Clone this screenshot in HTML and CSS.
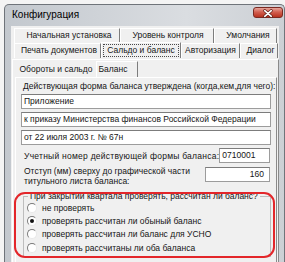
FILE: index.html
```html
<!DOCTYPE html>
<html lang="ru">
<head>
    <meta charset="UTF-8">
    <title>Конфигурация</title>
    <link rel="stylesheet" href="styles.css">
</head>
<body>
    <div class="window">
        <div class="titlebar">
            <span class="title">Конфигурация</span>
            <span class="close">
                <svg width="30" height="11" viewBox="0 0 30 11">
                    <path d="M11.5 2.5 L18.5 8.5 M18.5 2.5 L11.5 8.5" stroke="#5a1d17" stroke-width="3.2" stroke-linecap="round"/>
                    <path d="M11.5 2.5 L18.5 8.5 M18.5 2.5 L11.5 8.5" stroke="#ffffff" stroke-width="1.8" stroke-linecap="round"/>
                </svg>
            </span>
        </div>
        <div class="client">
            <div class="tab-row">
                <div class="tab t-start">Начальная установка</div>
                <div class="tab t-level">Уровень контроля</div>
                <div class="tab t-default">Умолчания</div>
            </div>
            <div class="tab-row">
                <div class="tab t-print">Печать документов</div>
                <div class="tab t-saldo active"><span class="focus">Сальдо и баланс</span></div>
                <div class="tab t-auth">Авторизация</div>
                <div class="tab t-dialog">Диалог</div>
            </div>
            <div class="page">
                <div class="subtabs">
                    <div class="subtab s-turn">Обороты и сальдо</div>
                    <div class="subtab s-balance active">Баланс</div>
                </div>
                <div class="subpage">
                    <div class="caption">Действующая форма баланса утверждена (когда,кем,для чего):</div>
                    <div class="field">Приложение</div>
                    <div class="field">к приказу Министерства финансов Российской Федерации</div>
                    <div class="field">от 22 июля 2003 г. № 67н</div>

                    <div class="form-row">
                        <span class="row-label wide">Учетный номер действующей формы баланса:</span>
                        <div class="field num">0710001</div>
                    </div>
                    <div class="form-row top">
                        <span class="row-label">Отступ (мм) сверху до графической части<br>титульного листа баланса:</span>
                        <div class="field num offset">160</div>
                    </div>

                    <fieldset class="group">
                        <legend>При закрытии квартала проверять, рассчитан ли баланс?</legend>
                        <div class="radio"><span class="dot"></span>не проверять</div>
                        <div class="radio"><span class="dot checked"></span>проверять рассчитан ли обыный баланс</div>
                        <div class="radio"><span class="dot"></span>проверять рассчитан ли баланс для УСНО</div>
                        <div class="radio"><span class="dot"></span>проверять рассчитаны ли оба баланса</div>
                    </fieldset>
                </div>
            </div>
        </div>
    </div>
    <div class="highlight"></div>
</body>
</html>
```

FILE: styles.css
```css
* {
    margin: 0;
    padding: 0;
    box-sizing: border-box;
}

body {
    position: relative;
    width: 285px;
    height: 262px;
    overflow: hidden;
    background-color: #f4f4f4;
    font-family: "Liberation Sans", Arial, sans-serif;
    font-size: 8.5px;
    color: #151515;
}

/* window frame */
.window {
    margin: 4px 0 0 4px;
    width: 281px;
    height: 258px;
    padding: 0 5px 0 6px;
    border: 1px solid #6f747a;
    border-bottom: none;
    border-radius: 5px 5px 0 0;
    background: linear-gradient(to right, #c3c8ce, #dadde1 65%, #ccd0d5);
}

.titlebar {
    height: 21px;
    display: flex;
    justify-content: space-between;
    align-items: flex-start;
}

.title {
    padding: 4px 0 0 1px;
    font-size: 10px;
    color: #000;
}

.close {
    margin: 2px -4px 0 0;
    width: 30px;
    height: 11px;
    border: 1px solid #7a2a22;
    border-radius: 3px;
    background: linear-gradient(to bottom, #e7a59b, #d25f50 45%, #b8321f);
    display: flex;
}

.client {
    height: 236px;
    padding-top: 2px;
    background-color: #f0f0f0;
}

/* outer tabs */
.tab-row {
    display: flex;
    height: 15px;
    padding-left: 3px;
}

.tab {
    height: 15px;
    line-height: 13px;
    text-align: center;
    border-top: 1px solid #fff;
    border-left: 1px solid #fff;
    border-right: 1px solid #7d7d7d;
    white-space: nowrap;
}

.t-start { width: 106px; padding-left: 4px; }
.t-level { width: 94px; padding-left: 2px; }
.t-default { width: 63px; padding-left: 5px; }
.t-print { width: 87px; padding-left: 3px; }
.t-saldo { width: 80px; }
.t-auth { width: 59px; }
.t-dialog { width: 38px; padding-left: 3px; }

.tab.active {
    height: 16px;
    margin-top: -1px;
    padding-top: 1px;
}

.focus {
    display: inline-block;
    line-height: 11px;
    padding: 0 3px;
    border: 1px dotted #4a4a4a;
}

.page {
    height: 204px;
    margin: 1px 0 0 1px;
    padding: 1px 1px 0 2px;
    border-top: 1px solid #fff;
    border-left: 1px solid #fff;
    border-right: 1px solid #8a8a8a;
}

/* inner tabs */
.subtabs {
    display: flex;
    height: 16px;
    padding-left: 1px;
}

.subtab {
    height: 16px;
    line-height: 14px;
    text-align: center;
    white-space: nowrap;
}

.s-turn { width: 80px; padding-top: 1px; }
.s-balance {
    width: 42px;
    border-top: 1px solid #fff;
    border-left: 1px solid #fff;
    border-right: 1px solid #7d7d7d;
    padding-right: 8px;
}

.subpage {
    height: 186px;
    padding: 3px 5px 0 5px;
    border-top: 1px solid #fff;
    border-left: 1px solid #fff;
    border-right: 1px solid #8a8a8a;
}

.caption {
    height: 10px;
    line-height: 10px;
    margin: 0 0 3px 2px;
    white-space: nowrap;
}

.field {
    width: 250px;
    height: 15px;
    margin-bottom: 3px;
    padding-left: 2px;
    line-height: 13px;
    background-color: #fff;
    border: 1px solid #9c9c9c;
    border-top-color: #7c7c7c;
    white-space: nowrap;
}

.form-row {
    display: flex;
    justify-content: space-between;
    align-items: center;
    padding-left: 3px;
    margin-top: 1px;
}

.form-row .field {
    width: 66px;
    margin: 0 1px 0 0;
}

.form-row.top {
    align-items: flex-start;
    margin-top: 3px;
}

.row-label {
    line-height: 10px;
    white-space: nowrap;
}

.row-label.wide {
    letter-spacing: 0.25px;
}

.field.offset {
    width: 65px;
    margin-top: 1px;
    padding-right: 5px;
    text-align: right;
}

/* radio group */
.group {
    width: 248px;
    margin: 5px 0 0 2px;
    padding: 0 4px 2px 4px;
    border: 1px solid #bdbdbd;
}

.group legend {
    padding: 0 2px;
    line-height: 10px;
    white-space: nowrap;
}

.radio {
    display: flex;
    align-items: center;
    height: 13.3px;
    white-space: nowrap;
}

.dot {
    position: relative;
    width: 10px;
    height: 10px;
    margin: 0 5px 0 -1px;
    border-radius: 50%;
    background-color: #fff;
    border: 1px solid;
    border-color: #7a7a7a #e8e8e8 #e8e8e8 #7a7a7a;
}

.dot.checked::after {
    content: "";
    position: absolute;
    left: 2px;
    top: 2px;
    width: 4px;
    height: 4px;
    border-radius: 50%;
    background-color: #111;
}

/* red annotation frame over the group */
.highlight {
    position: absolute;
    left: 14px;
    top: 192px;
    width: 261px;
    height: 66px;
    border: 2px solid #e3262a;
    border-radius: 11px;
}
```
